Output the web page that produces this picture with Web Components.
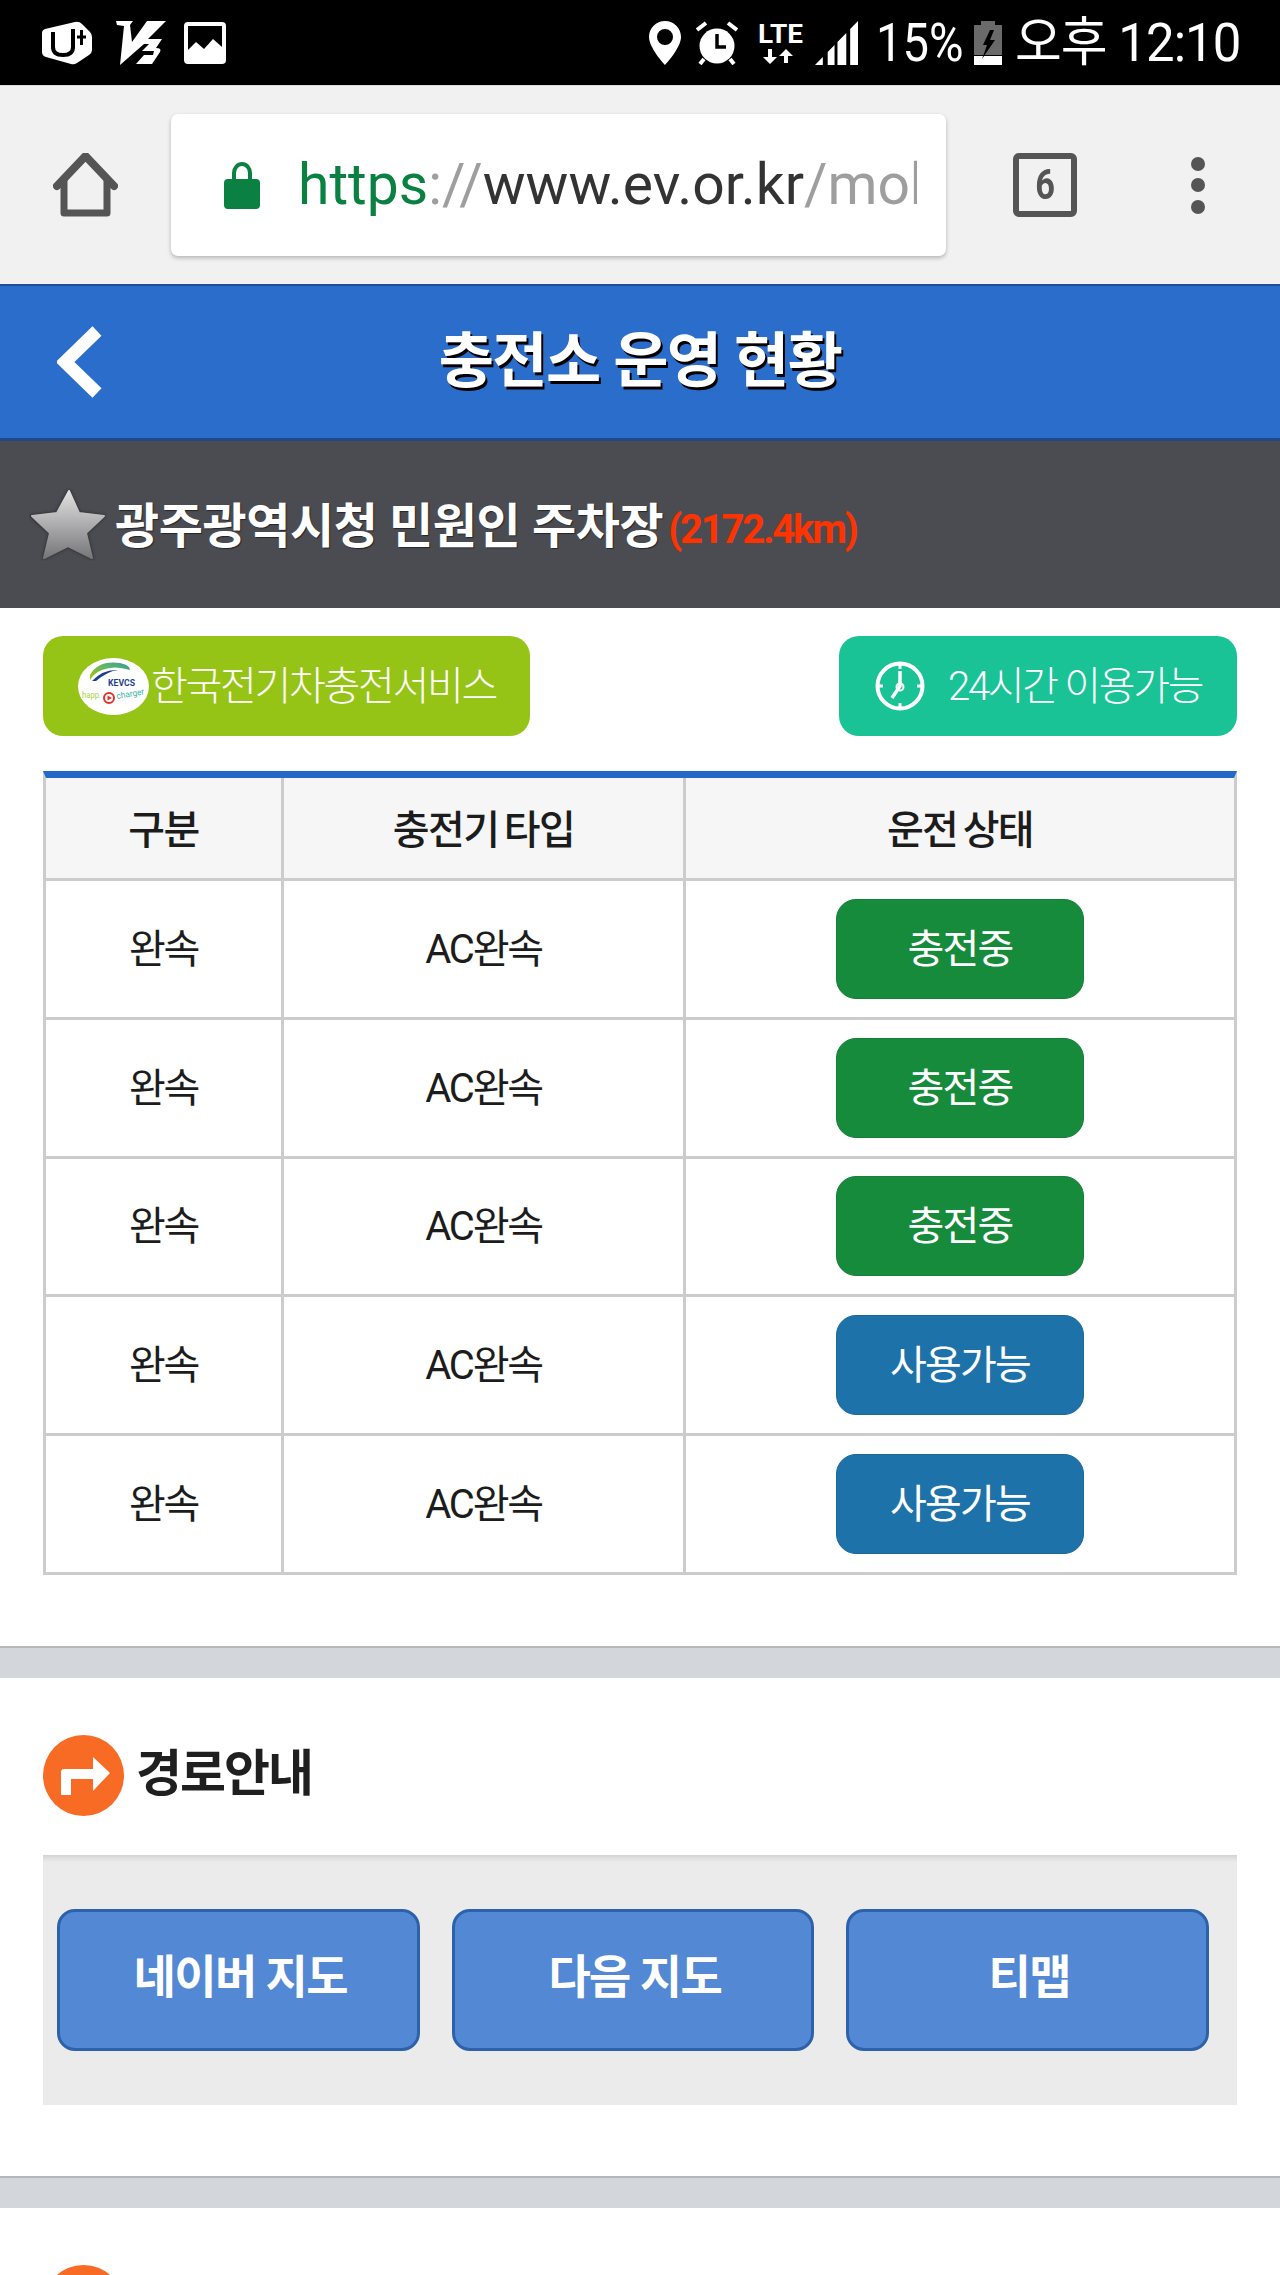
<!DOCTYPE html>
<html lang="ko">
<head>
<meta charset="utf-8">
<title>충전소 운영 현황</title>
<style>
    html, body { margin: 0; padding: 0; background: #fff; }
    body {
        width: 1280px;
        height: 2275px;
        overflow: hidden;
        font-family: Roboto, "Noto Sans CJK KR", sans-serif;
    }
</style>
</head>
<body>
<status-bar></status-bar>
<browser-toolbar></browser-toolbar>
<app-header>충전소 운영 현황</app-header>
<station-title distance="(2172.4km)">광주광역시청 민원인 주차장</station-title>

<badge-row>
    <info-badge slot="left" color="#95c417" kind="logo">한국전기차충전서비스</info-badge>
    <info-badge slot="right" color="#19c396" kind="clock">24시간 이용가능</info-badge>
</badge-row>

<charger-table>
    <charger-row kind="완속" model="AC완속" state="충전중" tone="green"></charger-row>
    <charger-row kind="완속" model="AC완속" state="충전중" tone="green"></charger-row>
    <charger-row kind="완속" model="AC완속" state="충전중" tone="green"></charger-row>
    <charger-row kind="완속" model="AC완속" state="사용가능" tone="blue"></charger-row>
    <charger-row kind="완속" model="AC완속" state="사용가능" tone="blue"></charger-row>
</charger-table>

<section-band></section-band>
<route-section heading="경로안내">
    <map-button>네이버 지도</map-button>
    <map-button>다음 지도</map-button>
    <map-button>티맵</map-button>
</route-section>
<section-band></section-band>
<route-section></route-section>

<script>
// ==================== Status bar ====================
class StatusBar extends HTMLElement {
    constructor() {
        super();
        this.attachShadow({ mode: 'open' });
        this.shadowRoot.innerHTML = `
            <style>
                :host {
                    display: flex;
                    align-items: center;
                    height: 85px;
                    padding: 0 41px 0 42px;
                    background: #000;
                    color: #fff;
                    border-bottom: 1px solid #dcdcdc;
                }
                svg { display: block; flex: none; fill: #fff; }
                .fit {
                    display: block;
                    flex: none;
                    height: 60px;
                    line-height: 60px;
                    font-weight: 400;
                    white-space: nowrap;
                    transform-origin: 0 50%;
                }
                .pct { width: 85px; margin-left: 18.500px; font-size: 53px; transform: scaleX(.89); }
                .time {
                    width: 224px;
                    margin-left: 13px;
                    font-size: 53px;
                    letter-spacing: -1px;
                    transform: scaleX(.96);
                }
            </style>
            <svg width="50" height="44" viewBox="0 0 50 44">
                <path d="M3 8 L33 1 Q37 0 40 3 L48 11 Q50 13 50 16 V29 Q50 32 47 34 L35 42 Q32 44 29 43 L4 36 Q0 35 0 31 V12 Q0 9 3 8Z"/>
                <path d="M11 11 V26 Q11 34 21 34 Q31 34 31 26 V8" fill="none" stroke="#000" stroke-width="4"/>
                <path d="M35 16 H44 M39.500 9 V24" fill="none" stroke="#000" stroke-width="3"/>
            </svg>
            <svg width="50" height="45" viewBox="0 0 50 45" style="margin-left:24px">
                <path d="M0 1 H17 L14 5 L16 22 L31 1 H50 L32 19 H46 L40 28 Q46 28 44 32 L36 44 H20 L28 35 H37 L38 31 H26 L33 24 H28 L4 45 L8 6 L1 5Z"/>
            </svg>
            <svg width="42" height="42" viewBox="0 0 42 42" style="margin-left:18px">
                <rect width="42" height="42" rx="4"/>
                <path d="M4 4 H38 V25 L29 17 L20 27 L12 20 L4 28Z" fill="#000"/>
            </svg>

            <svg width="32" height="44" viewBox="0 0 32 44" style="margin-left:auto">
                <path fill-rule="evenodd" d="M16 0 C7 0 0 7 0 16 C0 27 16 44 16 44 C16 44 32 27 32 16 C32 7 25 0 16 0Z M16 8 A8 8 0 1 1 16 24 A8 8 0 1 1 16 8Z"/>
            </svg>
            <svg width="42" height="44" viewBox="0 0 42 44" style="margin-left:15px">
                <circle cx="21" cy="25" r="17.500"/>
                <path d="M1 9 L10 2 M32 2 L41 9 M4 43 L8 38 M38 43 L34 38" stroke="#fff" stroke-width="4" fill="none"/>
                <path d="M21 13 V26 H30" stroke="#000" stroke-width="3.500" fill="none"/>
            </svg>
            <svg width="46" height="52" viewBox="0 -4 46 52" style="margin-left:20px">
                <text x="0" y="22" font-family="Roboto, sans-serif" font-weight="700" font-size="26" textLength="45" lengthAdjust="spacingAndGlyphs">LTE</text>
                <path d="M10 28 H14 V36 H19 L12 43 L5 36 H10Z M26 35 H30 V42 H26Z M28 28 L35 35 H21Z"/>
            </svg>
            <svg width="43" height="44" viewBox="0 0 44 44" preserveAspectRatio="none" style="margin-left:11px">
                <path d="M0 44 L8 36 V44Z M13 31 L20 24 V44 H13Z M23 21 L32 12 V44 H23Z M36 8 L44 0 V44 H36Z"/>
            </svg>
            <span class="pct fit">15%</span>
            <svg width="28" height="44" viewBox="0 0 28 44" style="margin-left:13px">
                <path d="M7 0 H21 V4 H28 V34 H0 V4 H7Z" fill="#6a6a6a"/>
                <rect y="35" width="28" height="9"/>
                <path d="M16 9 L9 24 H13 L8 38 L21 19 H16 L20 9Z" fill="#000"/>
            </svg>
            <span class="time fit">오후 12:10</span>
        `;
    }
}

// ==================== Browser toolbar ====================
class BrowserToolbar extends HTMLElement {
    constructor() {
        super();
        this.attachShadow({ mode: 'open' });
        this.shadowRoot.innerHTML = `
            <style>
                :host {
                    display: flex;
                    align-items: center;
                    height: 198px;
                    padding-left: 53px;
                    background: #f1f1f1;
                }
                svg { display: block; flex: none; }
                .url {
                    display: flex;
                    align-items: center;
                    box-sizing: border-box;
                    width: 775px;
                    height: 142px;
                    margin-left: 53px;
                    padding-left: 53px;
                    background: #fff;
                    border-radius: 7px;
                    box-shadow: 0 2px 4px rgba(0, 0, 0, .25);
                }
                .address {
                    width: 619px;
                    margin-left: 38px;
                    overflow: hidden;
                    white-space: nowrap;
                    font-size: 57px;
                    font-weight: 400;
                    line-height: 70px;
                    color: #333;
                }
                .scheme { color: #0b8043; }
                .dim { color: #9e9e9e; }
                .tabs {
                    display: flex;
                    align-items: center;
                    justify-content: center;
                    box-sizing: border-box;
                    flex: none;
                    width: 64px;
                    height: 64px;
                    margin-left: 67px;
                    border: 6px solid #555;
                    border-radius: 6px;
                    color: #555;
                    font-size: 42px;
                    font-weight: 700;
                    line-height: 1;
                }
                .tabs span { display: block; transform: scaleX(.82); }
                .dots {
                    display: flex;
                    flex-direction: column;
                    gap: 7.500px;
                    margin-left: 114px;
                }
                .dots i { display: block; width: 14px; height: 14px; border-radius: 50%; background: #555; }
            </style>
            <svg width="65" height="64" viewBox="0 0 65 64">
                <path d="M4 33 L32.500 3 L61 33" fill="none" stroke="#555" stroke-width="8" stroke-linecap="round" stroke-linejoin="round"/>
                <path d="M11 25 V60 H54 V25" fill="none" stroke="#555" stroke-width="7" stroke-linejoin="round"/>
            </svg>
            <div class="url">
                <svg width="36" height="47" viewBox="0 0 36 47">
                    <path fill="#0b8043" d="M4 17 H8 V11 A10 11 0 0 1 28 11 V17 H32 Q36 17 36 21 V43 Q36 47 32 47 H4 Q0 47 0 43 V21 Q0 17 4 17Z M12 17 H24 V11 A6 7 0 0 0 12 11Z"/>
                </svg>
                <div class="address"><span class="scheme">https</span><span class="dim">://</span>www.ev.or.kr<span class="dim">/mobile</span></div>
            </div>
            <div class="tabs"><span>6</span></div>
            <div class="dots"><i></i><i></i><i></i></div>
        `;
    }
}

// ==================== App header ====================
class AppHeader extends HTMLElement {
    constructor() {
        super();
        this.attachShadow({ mode: 'open' });
        this.shadowRoot.innerHTML = `
            <style>
                :host {
                    display: grid;
                    grid-template-columns: 1fr auto 1fr;
                    align-items: center;
                    box-sizing: border-box;
                    height: 157px;
                    background: #2a6dca;
                    border-top: 2px solid #1f4f96;
                    border-bottom: 3px solid #20478a;
                    color: #fff;
                }
                svg { display: block; margin-left: 57px; }
                .title {
                    font-size: 60px;
                    font-weight: 700;
                    letter-spacing: -1.500px;
                    line-height: 80px;
                    text-shadow: 2px 3px 0 #000;
                }
            </style>
            <svg width="46" height="72" viewBox="0 0 46 72">
                <path d="M40 5 L8 36 L40 67" fill="none" stroke="#fff" stroke-width="13"/>
            </svg>
            <div class="title"><slot></slot></div>
            <span></span>
        `;
    }
}

// ==================== Station title ====================
class StationTitle extends HTMLElement {
    constructor() {
        super();
        this.attachShadow({ mode: 'open' });
    }

    connectedCallback() {
        const distance = this.getAttribute('distance') || '';
        this.shadowRoot.innerHTML = `
            <style>
                :host {
                    display: flex;
                    align-items: center;
                    box-sizing: border-box;
                    height: 167px;
                    padding-left: 29px;
                    background: #4b4c52;
                    color: #fff;
                }
                svg { display: block; flex: none; }
                .name {
                    margin: 0 0 6px 8px;
                    font-size: 48px;
                    font-weight: 700;
                    letter-spacing: -.4px;
                    white-space: nowrap;
                    text-shadow: 1px 1px 1px rgba(0, 0, 0, .5);
                }
                .distance {
                    margin: 10px 0 0 5px;
                    color: #ff3300;
                    font-size: 40px;
                    font-weight: 700;
                    letter-spacing: -2.200px;
                    white-space: nowrap;
                }
            </style>
            <svg width="78" height="73" viewBox="0 0 78 73">
                <defs>
                    <linearGradient id="star" x1="0" y1="0" x2="0" y2="1">
                        <stop offset="0" stop-color="#e2e2e2"/>
                        <stop offset="1" stop-color="#77777a"/>
                    </linearGradient>
                    <filter id="soft" x="-10%" y="-10%" width="120%" height="120%">
                        <feGaussianBlur stdDeviation="1.500"/>
                    </filter>
                </defs>
                <path d="M40 3 L50 25 L75 28 L57 45 L63 70 L39 58 L15 70 L21 45 L2 28 L28 25Z" fill="#2b2b2f" stroke="#2b2b2f" stroke-width="3" stroke-linejoin="round" filter="url(#soft)"/>
                <path d="M40 3 L50 25 L75 28 L57 45 L63 70 L39 58 L15 70 L21 45 L3 28 L28 25Z" fill="url(#star)" stroke="url(#star)" stroke-width="2" stroke-linejoin="round"/>
            </svg>
            <span class="name"><slot></slot></span>
            <span class="distance">${distance}</span>
        `;
    }
}

// ==================== Badges ====================
class BadgeRow extends HTMLElement {
    constructor() {
        super();
        this.attachShadow({ mode: 'open' });
        this.shadowRoot.innerHTML = `
            <style>
                :host {
                    display: flex;
                    justify-content: space-between;
                    padding: 28px 43px 35px;
                    background: #fff;
                }
            </style>
            <slot name="left"></slot>
            <slot name="right"></slot>
        `;
    }
}

const BADGE_ICONS = {
    logo: `
        <svg width="71" height="57" viewBox="0 0 71 57">
            <defs>
                <linearGradient id="swoosh" x1="0" y1="1" x2="1" y2="0">
                    <stop offset="0" stop-color="#a7c400"/>
                    <stop offset=".6" stop-color="#5fb56c"/>
                    <stop offset="1" stop-color="#2f9c9c"/>
                </linearGradient>
            </defs>
            <ellipse cx="35.500" cy="28.500" rx="35.500" ry="28.500" fill="#fff"/>
            <path d="M12 17 Q20 2 42 5 Q52 7 52 12 Q36 7 24 12 Q16 15 12 22Z" fill="url(#swoosh)"/>
            <path d="M14 23 Q25 11 40 12 Q30 13 18 23Z" fill="#1c3f8c"/>
            <text x="30" y="28" font-family="Roboto, sans-serif" font-weight="700" font-size="9" textLength="27" lengthAdjust="spacingAndGlyphs" fill="#1f3f8e">KEVCS</text>
            <text x="4" y="40" font-family="Roboto, sans-serif" font-size="9" textLength="19" lengthAdjust="spacingAndGlyphs" fill="#a6cf4a">happ.</text>
            <circle cx="31" cy="40" r="5" fill="none" stroke="#e2332b" stroke-width="2"/>
            <path d="M29.500 37.500 L34 40 L29.500 42.500Z" fill="#e2332b"/>
            <text x="39" y="41" font-family="Roboto, sans-serif" font-size="8.500" textLength="28" lengthAdjust="spacingAndGlyphs" fill="#37b5a8" transform="rotate(-10 39 41)">charger</text>
        </svg>`,
    clock: `
        <svg width="50" height="50" viewBox="0 0 50 50">
            <circle cx="25" cy="25" r="22.500" fill="none" stroke="#fff" stroke-width="4"/>
            <path d="M25 3 V8 M25 42 V47 M3 25 H8 M42 25 H47" stroke="#fff" stroke-width="3"/>
            <path d="M25 10 V25 L17 37" fill="none" stroke="#fff" stroke-width="3.500"/>
            <circle cx="25" cy="26" r="3.500" fill="none" stroke="#fff" stroke-width="2"/>
        </svg>`
};

class InfoBadge extends HTMLElement {
    constructor() {
        super();
        this.attachShadow({ mode: 'open' });
    }

    connectedCallback() {
        const kind = this.getAttribute('kind') || 'logo';
        const color = this.getAttribute('color') || '#95c417';
        const isLogo = kind === 'logo';
        this.shadowRoot.innerHTML = `
            <style>
                :host {
                    display: flex;
                    align-items: center;
                    box-sizing: border-box;
                    height: 100px;
                    width: ${isLogo ? 487 : 398}px;
                    padding-left: ${isLogo ? 35 : 36}px;
                    gap: ${isLogo ? 2 : 23}px;
                    border-radius: 20px;
                    background: ${color};
                    color: #fff;
                }
                svg { display: block; flex: none; }
                span {
                    margin-bottom: 6px;
                    font-size: 40px;
                    font-weight: 300;
                    letter-spacing: -2.300px;
                    white-space: nowrap;
                }
            </style>
            ${BADGE_ICONS[kind]}
            <span><slot></slot></span>
        `;
    }
}

// ==================== Charger table ====================
const CHARGER_COLUMNS = '235px 3px 399px 3px 548px';

class ChargerTable extends HTMLElement {
    constructor() {
        super();
        this.attachShadow({ mode: 'open' });
        this.shadowRoot.innerHTML = `
            <style>
                :host {
                    display: block;
                    margin: 0 43px;
                    border-top: 7px solid #2469c6;
                    border-left: 3px solid #ccc;
                    border-right: 3px solid #ccc;
                }
                .head {
                    display: grid;
                    grid-template-columns: ${CHARGER_COLUMNS};
                    height: 100px;
                    background: #f6f6f6;
                    border-bottom: 3px solid #ccc;
                    color: #1c1c1c;
                    font-size: 40px;
                    font-weight: 500;
                    letter-spacing: -1.600px;
                    word-spacing: -3px;
                }
                .head div {
                    display: flex;
                    align-items: center;
                    justify-content: center;
                    padding-bottom: 3px;
                }
                .head i { background: #ccc; }
            </style>
            <div class="head">
                <div>구분</div><i></i><div>충전기 타입</div><i></i><div>운전 상태</div>
            </div>
            <slot></slot>
        `;
    }
}

class ChargerRow extends HTMLElement {
    constructor() {
        super();
        this.attachShadow({ mode: 'open' });
    }

    connectedCallback() {
        const kind = this.getAttribute('kind') || '';
        const model = this.getAttribute('model') || '';
        const state = this.getAttribute('state') || '';
        const tone = this.getAttribute('tone') || 'green';
        this.shadowRoot.innerHTML = `
            <style>
                :host {
                    display: grid;
                    grid-template-columns: ${CHARGER_COLUMNS};
                    height: 138.800px;
                    box-sizing: border-box;
                    background: #fff;
                    border-bottom: 3px solid #ccc;
                    color: #1c1c1c;
                    font-size: 40px;
                    font-weight: 400;
                    letter-spacing: -2.200px;
                }
                div {
                    display: flex;
                    align-items: center;
                    justify-content: center;
                }
                .text { padding-bottom: 6px; }
                i { background: #ccc; }
            </style>
            <div class="text">${kind}</div><i></i><div class="text">${model}</div><i></i>
            <div><status-pill tone="${tone}">${state}</status-pill></div>
        `;
    }
}

class StatusPill extends HTMLElement {
    constructor() {
        super();
        this.attachShadow({ mode: 'open' });
    }

    connectedCallback() {
        const blue = this.getAttribute('tone') === 'blue';
        this.shadowRoot.innerHTML = `
            <style>
                :host {
                    display: flex;
                    align-items: center;
                    justify-content: center;
                    box-sizing: border-box;
                    width: 248px;
                    height: 100px;
                    padding-bottom: 6px;
                    border-radius: 20px;
                    border: 1px solid ${blue ? '#1a6a9c' : '#14803a'};
                    background: ${blue ? '#1d72a9' : '#168b3c'};
                    color: #fff;
                    font-size: 40px;
                    font-weight: 400;
                    letter-spacing: -1.800px;
                }
            </style>
            <slot></slot>
        `;
    }
}

// ==================== Route section ====================
class SectionBand extends HTMLElement {
    constructor() {
        super();
        this.attachShadow({ mode: 'open' });
        this.shadowRoot.innerHTML = `
            <style>
                :host {
                    display: block;
                    box-sizing: border-box;
                    height: 32px;
                    margin-top: 71px;
                    background: #d3d6da;
                    border-top: 2px solid #b5b7ba;
                }
            </style>
        `;
    }
}

class RouteSection extends HTMLElement {
    constructor() {
        super();
        this.attachShadow({ mode: 'open' });
    }

    connectedCallback() {
        const heading = this.getAttribute('heading');
        this.shadowRoot.innerHTML = `
            <style>
                :host {
                    display: block;
                    padding: 57px 43px 0;
                    background: #fff;
                }
                .heading {
                    display: flex;
                    align-items: center;
                    gap: 12px;
                    height: 81px;
                    color: #1f1f1f;
                    font-size: 50px;
                    font-weight: 700;
                    letter-spacing: -2px;
                }
                .heading span { padding-bottom: 3px; line-height: 60px; }
                svg { display: block; flex: none; }
                .box {
                    display: grid;
                    grid-template-columns: repeat(3, 362.500px);
                    column-gap: 32px;
                    margin-top: 39px;
                    padding: 54px 14px;
                    background: #ebebeb;
                    box-shadow: inset 0 8px 6px -6px rgba(0, 0, 0, .14);
                }
            </style>
            <div class="heading">
                <svg width="81" height="81" viewBox="0 0 81 81">
                    <circle cx="40.500" cy="40.500" r="40.500" fill="#f76b25"/>
                    <path fill="#fff" d="M18 60 V37 Q18 34 21 34 H50 V22 L67 38 L50 56 V44 H28 V60Z"/>
                </svg>
                ${heading ? `<span>${heading}</span>` : ''}
            </div>
            ${heading ? '<div class="box"><slot></slot></div>' : ''}
        `;
    }
}

class MapButton extends HTMLElement {
    constructor() {
        super();
        this.attachShadow({ mode: 'open' });
        this.shadowRoot.innerHTML = `
            <style>
                :host {
                    display: flex;
                    align-items: center;
                    justify-content: center;
                    box-sizing: border-box;
                    height: 142px;
                    padding: 0 0 14px 4px;
                    border: 3px solid #2d62ab;
                    border-radius: 18px;
                    background: #5388d5;
                    color: #fff;
                    font-size: 46px;
                    font-weight: 700;
                    letter-spacing: -1.600px;
                }
            </style>
            <slot></slot>
        `;
    }
}

customElements.define('status-bar', StatusBar);
customElements.define('browser-toolbar', BrowserToolbar);
customElements.define('app-header', AppHeader);
customElements.define('station-title', StationTitle);
customElements.define('badge-row', BadgeRow);
customElements.define('info-badge', InfoBadge);
customElements.define('charger-table', ChargerTable);
customElements.define('charger-row', ChargerRow);
customElements.define('status-pill', StatusPill);
customElements.define('section-band', SectionBand);
customElements.define('route-section', RouteSection);
customElements.define('map-button', MapButton);
</script>
</body>
</html>
